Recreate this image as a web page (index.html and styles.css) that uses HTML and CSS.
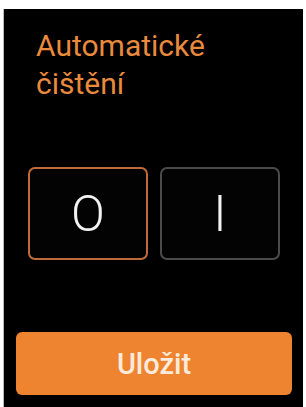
FILE: index.html
```html
<!DOCTYPE html>
<html lang="cs">
<head>
  <meta charset="UTF-8">
  <title>Automatické čištění</title>
  <link rel="stylesheet" href="styles.css">
</head>
<body>
  <div class="screen">
    <h1 class="title">Automatické čištění</h1>
    <div class="toggle">
      <button class="opt active">O</button>
      <button class="opt">I</button>
    </div>
    <button class="save">Uložit</button>
  </div>
</body>
</html>
```
FILE: styles.css
```css
html, body { margin: 0; padding: 0; background: #fff; }
body { font-family: Roboto, "Noto Sans", sans-serif; width: 306px; height: 407px; overflow: hidden; }
.screen { margin: 9px 3px 0 3px; height: 398px; background: #000; box-sizing: border-box; padding: 18px 11px 12px 12px; display: flex; flex-direction: column; border-left: 1px solid #bbb; }
.title { margin: 0 0 0 20px; font-size: 30px; line-height: 38px; font-weight: 400; color: #e98a3c; width: 210px; }
.toggle { display: flex; justify-content: center; gap: 12px; margin-top: 64px; }
.opt { width: 120px; height: 93px; box-sizing: border-box; background: #030303; border: 2px solid #4a4a4a; border-radius: 7px; color: #f2f2f2; font-family: Roboto, sans-serif; font-size: 50px; font-weight: 300; padding: 0; }
.opt.active { border-color: #c06a3c; }
.save { margin-top: auto; height: 63px; border: 0; border-radius: 6px; background: #ee8430; color: #fcebdc; font-family: Roboto, sans-serif; font-size: 29px; font-weight: 500; padding: 0; }
```
